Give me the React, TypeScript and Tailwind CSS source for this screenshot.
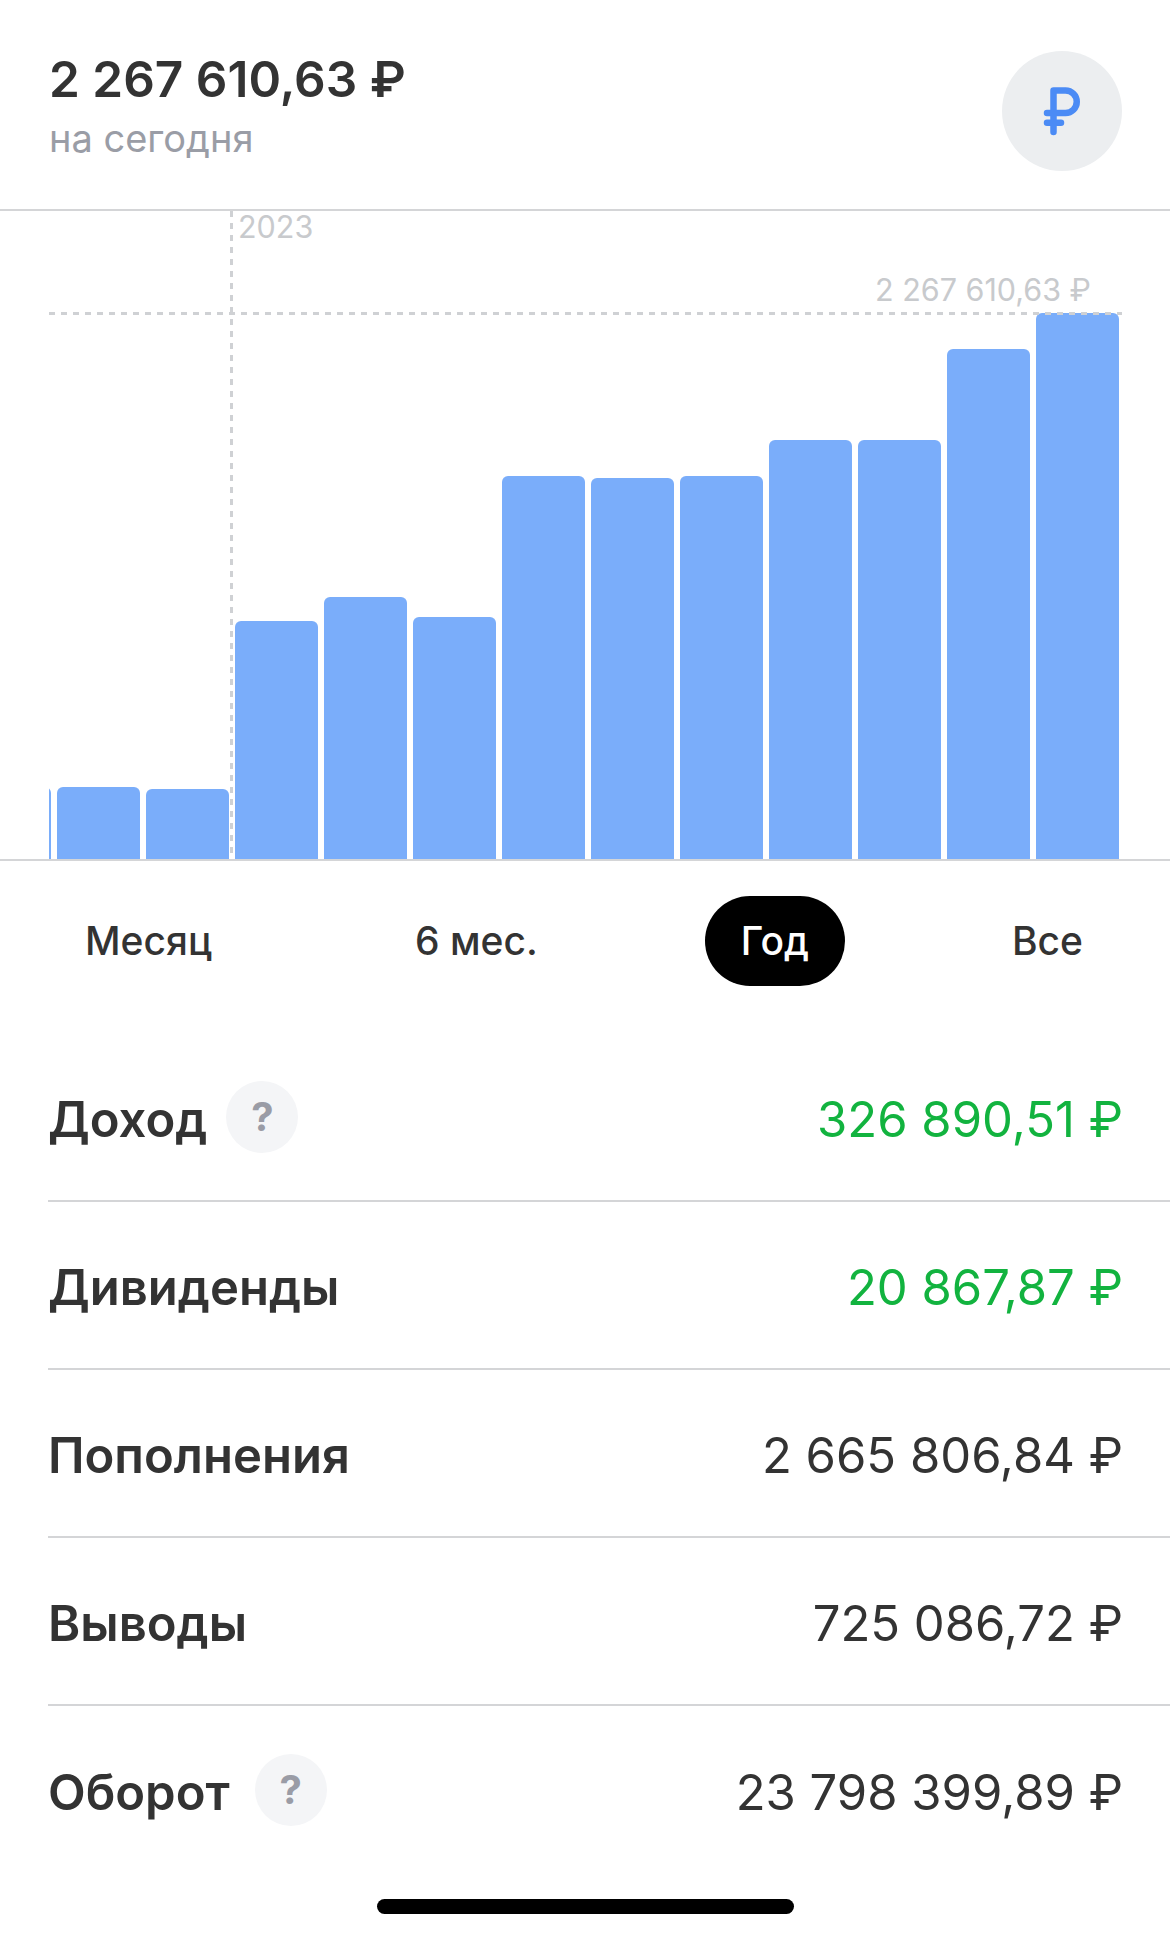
const bars = [787, 787, 789, 621, 597, 617, 476, 478, 476, 440, 440, 349, 313];

const chartBottom = 859;

const tabs = ["Месяц", "6 мес.", "Год", "Все"];

const rows = [
  { label: "Доход", value: "326 890,51 ₽", green: true, help: "ml-[19px]" },
  { label: "Дивиденды", value: "20 867,87 ₽", green: true, help: "" },
  { label: "Пополнения", value: "2 665 806,84 ₽", green: false, help: "" },
  { label: "Выводы", value: "725 086,72 ₽", green: false, help: "" },
  { label: "Оборот", value: "23 798 399,89 ₽", green: false, help: "ml-[25px]" },
];

function RubleIcon() {
  return (
    <svg width="40" height="50" viewBox="0 0 40 50" fill="none">
      <path
        d="M11.5 46V4.5H23.5a11.25 11.25 0 0 1 0 22.5H5M5 36.7h14"
        stroke="#4b8bf5"
        strokeWidth="6.5"
        strokeLinecap="round"
        strokeLinejoin="round"
      />
    </svg>
  );
}

export default function App() {
  return (
    <div className="relative w-[1170px] h-[1938px] overflow-hidden bg-white font-['Inter',sans-serif] text-[#333333]">
      {/* шапка */}
      <div className="h-[211px] flex items-start justify-between border-b-2 border-[#d4d5d7] pl-[49px] pr-[48px]">
        <div className="pt-[49px]">
          <div className="text-[49.5px] leading-[60px] font-semibold">2 267 610,63 ₽</div>
          <div className="text-[38px] leading-[46px] text-[#9a9da6] mt-[6px]">на сегодня</div>
        </div>
        <div className="mt-[51px] w-[120px] h-[120px] rounded-full bg-[#eceef0] flex items-center justify-center">
          <RubleIcon />
        </div>
      </div>

      {/* график */}
      <div className="relative h-[650px] border-b-2 border-[#d4d5d7]">
        <div className="absolute left-[230px] top-0 bottom-0 w-[3px] bg-[repeating-linear-gradient(to_bottom,#cfd1d4_0,#cfd1d4_6px,transparent_6px,transparent_12px)]" />
        <div className="absolute left-[238px] top-0 text-[30.5px] leading-[32px] text-[#c8cacd]">2023</div>
        <div className="absolute right-[79px] top-[63px] text-[30.5px] leading-[32px] text-[#c8cacd]">2 267 610,63 ₽</div>
        <div className="ml-[49px] h-full overflow-hidden">
          <div className="ml-[-81px] flex h-full items-end gap-[6px]">
            {bars.map((top, i) => (
              <div
                key={i}
                className="w-[83px] shrink-0 rounded-t-[6px] bg-[#7aadfa]"
                style={{ height: chartBottom - top }}
              />
            ))}
          </div>
        </div>
        <div className="absolute left-[49px] right-[48px] top-[101px] h-[3px] bg-[repeating-linear-gradient(to_right,#cfd1d4_0,#cfd1d4_6px,transparent_6px,transparent_12px)]" />
      </div>

      {/* период */}
      <div className="flex items-center justify-between pl-[49px] pr-[51px] pt-[35px]">
        {tabs.map((tab) => (
          <div
            key={tab}
            className={
              tab === "Год"
                ? "h-[90px] px-[36px] flex items-center rounded-full bg-black text-white text-[39px] font-medium"
                : "h-[90px] px-[36px] flex items-center text-[39px] font-medium"
            }
          >
            {tab}
          </div>
        ))}
      </div>

      {/* строки */}
      <div className="pl-[48px] mt-[48px]">
        {rows.map((row, i) => (
          <div
            key={row.label}
            className={
              i < rows.length - 1
                ? "h-[168px] flex items-center justify-between pr-[47px] border-b-2 border-[#d4d5d7]"
                : "h-[168px] flex items-center justify-between pr-[47px]"
            }
          >
            <div className="flex items-center">
              <span className="pt-[6px] text-[49px] font-semibold">{row.label}</span>
              {row.help && (
                <span
                  className={`${row.help} w-[72px] h-[72px] rounded-full bg-[#f4f5f7] flex items-center justify-center text-[40px] font-bold text-[#9a9ca6]`}
                >
                  ?
                </span>
              )}
            </div>
            <span className={row.green ? "pt-[6px] text-[49px] text-[#12b33f]" : "pt-[6px] text-[49px]"}>
              {row.value}
            </span>
          </div>
        ))}
      </div>

      <div className="absolute left-[377px] top-[1899px] w-[417px] h-[15px] rounded-full bg-black" />
    </div>
  );
}
